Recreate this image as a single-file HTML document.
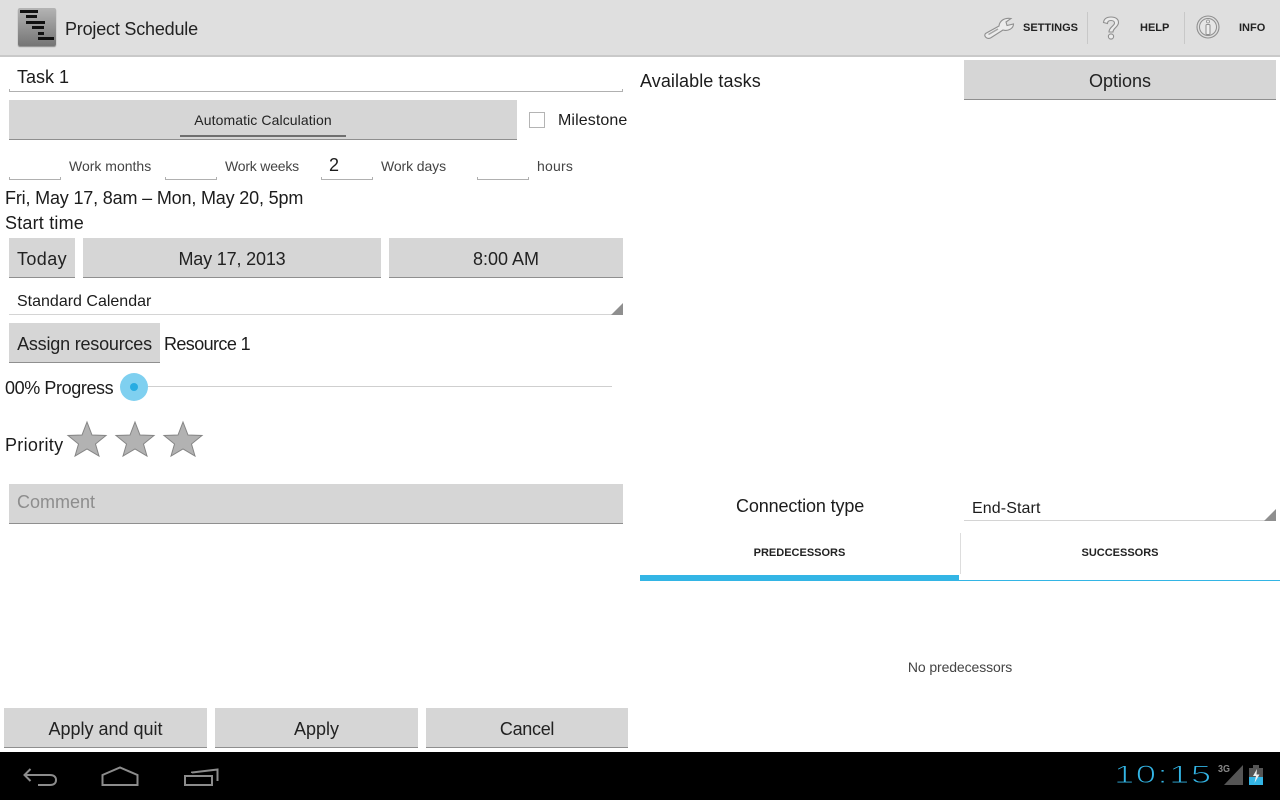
<!DOCTYPE html>
<html><head><meta charset="utf-8"><style>
html,body{margin:0;padding:0;width:1280px;height:800px;overflow:hidden;background:#fff}
body{position:relative;font-family:"Liberation Sans",sans-serif;color:#1c1c1c}
.a{position:absolute}
.t{position:absolute;white-space:nowrap;line-height:20px;height:20px}
.b{position:absolute;background:#d6d6d6;border-bottom:1px solid #8f8f8f;box-sizing:border-box;text-align:center;color:#222;font-size:18px}
.u{position:absolute;height:3px;box-sizing:border-box;border:1px solid #b0b0b0;border-top:0}
</style></head><body>
<div class="a" style="left:0;top:0;width:1280px;height:55px;background:#dfdfdf"></div>
<div class="a" style="left:0;top:55px;width:1280px;height:2px;background:#c9c9c9"></div>
<div class="a" style="left:18px;top:8px;width:38px;height:38px;border-radius:2px;background:linear-gradient(#b4b4b4,#757575);box-shadow:0 1px 1px #888"></div>
<div class="a" style="left:20px;top:10px;width:18px;height:3px;background:#111"></div>
<div class="a" style="left:26px;top:15px;width:11px;height:3px;background:#111"></div>
<div class="a" style="left:26px;top:21px;width:19px;height:3px;background:#111"></div>
<div class="a" style="left:32px;top:26px;width:12px;height:3px;background:#111"></div>
<div class="a" style="left:38px;top:32px;width:6px;height:3px;background:#111"></div>
<div class="a" style="left:38px;top:37px;width:16px;height:3px;background:#111"></div>
<div class="t" style="left:65px;top:19px;font-size:18px;color:#222;letter-spacing:-.2px">Project Schedule</div>
<svg class="a" style="left:984px;top:16px" width="31" height="24" viewBox="0 0 31 24"><path d="M1.500 17.500 L15 10 C15.500 5 20 1.500 27 2.500 L22 6 L23 9.500 L29.500 8 C29.500 12.500 24 15.500 19 14 L6.500 22 C2.500 23.500 -0.500 20 1.500 17.500Z" fill="#ececec" stroke="#8f8f8f" stroke-width="1.100"/><path d="M4.500 18.500 L14 13" stroke="#a5a5a5" fill="none" stroke-width="1.500"/></svg>
<div class="t" style="left:1023px;top:18px;font-size:11px;font-weight:bold;color:#222">SETTINGS</div>
<div class="a" style="left:1087px;top:12px;width:1px;height:32px;background:#c8c8c8"></div>
<svg class="a" style="left:1102px;top:16px" width="18" height="25" viewBox="0 0 18 25"><path d="M1.500 6.500 C2 2.500 5 1 9 1 C13.500 1 16.500 3 16.500 6.500 C16.500 11 11 12 11 16 L7 16 C7 11 12.500 10 12.500 7 C12.500 5.500 11 4.500 9 4.500 C7 4.500 5.500 5.500 5.500 7.500Z" fill="#ececec" stroke="#8f8f8f" stroke-width="1.100"/><circle cx="9" cy="20.500" r="2.600" fill="#ececec" stroke="#8f8f8f" stroke-width="1.100"/></svg>
<div class="t" style="left:1140px;top:18px;font-size:11px;font-weight:bold;color:#222">HELP</div>
<div class="a" style="left:1184px;top:12px;width:1px;height:32px;background:#c8c8c8"></div>
<svg class="a" style="left:1196px;top:15px" width="24" height="24" viewBox="0 0 24 24"><circle cx="12" cy="12" r="11" fill="none" stroke="#8f8f8f" stroke-width="1.100"/><circle cx="12" cy="12" r="8.500" fill="#e6e6e6" stroke="#8f8f8f"/><rect x="10" y="9.500" width="4" height="10" rx="1" fill="#eee" stroke="#8f8f8f"/><circle cx="12" cy="6.500" r="1.500" fill="#eee" stroke="#8f8f8f" stroke-width=".8"/></svg>
<div class="t" style="left:1239px;top:18px;font-size:11px;font-weight:bold;color:#222">INFO</div>

<div class="t" style="left:17px;top:67px;font-size:18px">Task 1</div>
<div class="u" style="left:9px;top:89px;width:614px"></div>
<div class="b" style="left:9px;top:100px;width:508px;height:40px;font-size:14px;line-height:40px;letter-spacing:.1px">Automatic Calculation</div>
<div class="a" style="left:180px;top:135px;width:166px;height:2px;background:#6f6f6f"></div>
<div class="a" style="left:529px;top:112px;width:16px;height:16px;box-sizing:border-box;border:1px solid #b4b4b4"></div>
<div class="t" style="left:558px;top:111px;font-size:16px;letter-spacing:.1px">Milestone</div>

<div class="u" style="left:9px;top:177px;width:52px"></div>
<div class="t" style="left:69px;top:156px;font-size:14px;color:#444">Work months</div>
<div class="u" style="left:165px;top:177px;width:52px"></div>
<div class="t" style="left:225px;top:156px;font-size:14px;color:#444;letter-spacing:-.2px">Work weeks</div>
<div class="t" style="left:329px;top:155px;font-size:18px">2</div>
<div class="u" style="left:321px;top:177px;width:52px"></div>
<div class="t" style="left:381px;top:156px;font-size:14px;color:#444;letter-spacing:-.1px">Work days</div>
<div class="u" style="left:477px;top:177px;width:52px"></div>
<div class="t" style="left:537px;top:156px;font-size:14px;color:#444;letter-spacing:.2px">hours</div>

<div class="t" style="left:5px;top:188px;font-size:18px;letter-spacing:-.17px">Fri, May 17, 8am – Mon, May 20, 5pm</div>
<div class="t" style="left:5px;top:213px;font-size:18px;letter-spacing:.2px">Start time</div>
<div class="b" style="left:9px;top:238px;width:66px;height:40px;line-height:42px;letter-spacing:.4px">Today</div>
<div class="b" style="left:83px;top:238px;width:298px;height:40px;line-height:42px;letter-spacing:-.17px">May 17, 2013</div>
<div class="b" style="left:389px;top:238px;width:234px;height:40px;line-height:42px">8:00 AM</div>
<div class="t" style="left:17px;top:292px;font-size:16px">Standard Calendar</div>
<div class="a" style="left:9px;top:314px;width:614px;height:1px;background:#d4d4d4"></div>
<svg class="a" style="left:611px;top:303px" width="12" height="12"><path d="M12 0V12H0Z" fill="#8f8f8f"/></svg>
<div class="b" style="left:9px;top:323px;width:151px;height:40px;line-height:42px;letter-spacing:-.2px">Assign resources</div>
<div class="t" style="left:164px;top:334px;font-size:18px;letter-spacing:-.6px">Resource 1</div>
<div class="t" style="left:5px;top:378px;font-size:18px;letter-spacing:-.4px">00% Progress</div>
<div class="a" style="left:134px;top:386px;width:478px;height:1px;background:#cfcfcf"></div>
<div class="a" style="left:120px;top:373px;width:28px;height:28px;border-radius:50%;background:#7fd0f0"></div>
<div class="a" style="left:130px;top:383px;width:8px;height:8px;border-radius:50%;background:#28ace2"></div>
<div class="t" style="left:5px;top:435px;font-size:18px;letter-spacing:.3px">Priority</div>
<svg class="a" style="left:66px;top:420px" width="140" height="38">
<path d="M21 2 L26 15 L40 15.500 L29.500 24 L33 36 L21 29 L9 36 L12.500 24 L2 15.500 L16 15Z" fill="#b2b2b2" stroke="#858585"/>
<path transform="translate(48 0)" d="M21 2 L26 15 L40 15.500 L29.500 24 L33 36 L21 29 L9 36 L12.500 24 L2 15.500 L16 15Z" fill="#b2b2b2" stroke="#858585"/>
<path transform="translate(96 0)" d="M21 2 L26 15 L40 15.500 L29.500 24 L33 36 L21 29 L9 36 L12.500 24 L2 15.500 L16 15Z" fill="#b2b2b2" stroke="#858585"/></svg>
<div class="b" style="left:9px;top:484px;width:614px;height:40px;line-height:36px;text-align:left;padding-left:8px;color:#8d8d8d">Comment</div>
<div class="b" style="left:4px;top:708px;width:203px;height:40px;line-height:42px">Apply and quit</div>
<div class="b" style="left:215px;top:708px;width:203px;height:40px;line-height:42px">Apply</div>
<div class="b" style="left:426px;top:708px;width:202px;height:40px;line-height:42px;letter-spacing:-.3px">Cancel</div>

<div class="t" style="left:640px;top:71px;font-size:18px;letter-spacing:.07px">Available tasks</div>
<div class="b" style="left:964px;top:60px;width:312px;height:40px;line-height:42px">Options</div>
<div class="t" style="left:736px;top:496px;font-size:18px;letter-spacing:-.13px">Connection type</div>
<div class="t" style="left:972px;top:499px;font-size:16px;letter-spacing:.1px">End-Start</div>
<div class="a" style="left:964px;top:520px;width:312px;height:1px;background:#d4d4d4"></div>
<svg class="a" style="left:1264px;top:509px" width="12" height="12"><path d="M12 0V12H0Z" fill="#8f8f8f"/></svg>
<div class="t" style="left:640px;top:543px;width:319px;text-align:center;font-size:11px;font-weight:bold;color:#222">PREDECESSORS</div>
<div class="t" style="left:960px;top:543px;width:320px;text-align:center;font-size:11px;font-weight:bold;color:#222">SUCCESSORS</div>
<div class="a" style="left:960px;top:533px;width:1px;height:41px;background:#ddd"></div>
<div class="a" style="left:640px;top:575px;width:319px;height:6px;background:#33b5e5"></div>
<div class="a" style="left:959px;top:580px;width:321px;height:1px;background:#33b5e5"></div>
<div class="t" style="left:640px;top:657px;width:640px;text-align:center;font-size:14px;color:#444;letter-spacing:-.1px">No predecessors</div>

<div class="a" style="left:0;top:752px;width:1280px;height:48px;background:#000"></div>
<svg class="a" style="left:0;top:752px" width="240" height="48" fill="none" stroke="#8c8c8c" stroke-width="2"><path d="M25 23 H50 C54 23 56 25 56 28 C56 31 54 33 50 33 H38"/><path d="M30.500 17 L24.500 23 L30.500 29"/><path d="M102.500 33 V23 L120 15.500 L137.500 23 V33Z"/><path d="M185 24 H212 V33 H185Z"/><path d="M192 21 L192 20.500 L217.500 17.500 V29"/></svg>
<div class="t" style="left:1114px;top:762px;font-size:25px;line-height:26px;height:26px;color:#33b5e5;letter-spacing:1px;transform:scaleX(1.46);transform-origin:0 50%;-webkit-text-stroke:.9px #000">10:15</div>
<div class="t" style="left:1218px;top:764px;font-size:10px;line-height:12px;height:12px;font-weight:bold;color:#888;transform:scaleX(.9);transform-origin:0 50%">3G</div>
<svg class="a" style="left:1224px;top:765px" width="20" height="20"><path d="M19 0V20H0Z" fill="#555"/></svg>
<div class="a" style="left:1249px;top:768px;width:14px;height:17px;background:#33b5e5"></div>
<div class="a" style="left:1249px;top:768px;width:14px;height:9px;background:#555"></div>
<div class="a" style="left:1253px;top:765px;width:6px;height:3px;background:#555"></div>
<svg class="a" style="left:1250px;top:768px" width="12" height="17"><path d="M7 1 L3 8 H6 L4.500 15 L9.500 6.500 H6.500Z" fill="#eee"/></svg>
</body></html>
